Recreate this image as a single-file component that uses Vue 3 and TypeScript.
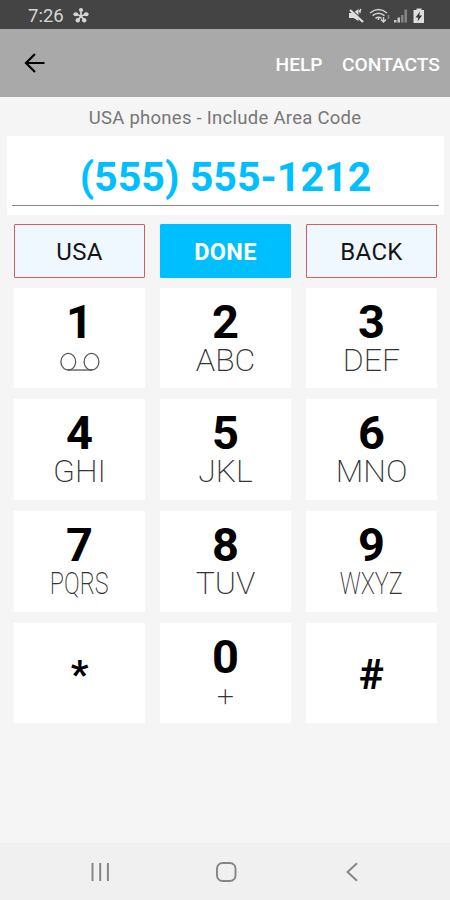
<script setup lang="ts">
interface Key {
  digit: string
  letters?: string
  kind?: 'voicemail' | 'star' | 'hash' | 'zero' | 'narrow'
}

const keys: Key[] = [
  { digit: '1', kind: 'voicemail' },
  { digit: '2', letters: 'ABC' },
  { digit: '3', letters: 'DEF' },
  { digit: '4', letters: 'GHI' },
  { digit: '5', letters: 'JKL' },
  { digit: '6', letters: 'MNO' },
  { digit: '7', letters: 'PQRS', kind: 'narrow' },
  { digit: '8', letters: 'TUV' },
  { digit: '9', letters: 'WXYZ', kind: 'narrow' },
  { digit: '*', kind: 'star' },
  { digit: '0', letters: '+', kind: 'zero' },
  { digit: '#', kind: 'hash' },
]
</script>

<template>
  <div class="screen">
    <div class="status">
      <span class="time">7:26</span>
      <svg class="flower" width="18" height="18" viewBox="0 0 18 18">
        <g fill="none" stroke="#d6d6d6" stroke-width="1.7">
          <path d="M9 9V5M9 9l4-1.300M9 9l2.600 3.600M9 9l-2.600 3.600M9 9L5 7.700" />
        </g>
        <g fill="#d6d6d6">
          <circle cx="9" cy="3" r="2.100" />
          <ellipse cx="14.200" cy="7.200" rx="2.400" ry="2" />
          <circle cx="12.200" cy="13.300" r="2.200" />
          <circle cx="5.800" cy="13.300" r="2.200" />
          <ellipse cx="3.800" cy="7.200" rx="2.400" ry="2" />
        </g>
      </svg>
      <svg class="indicators" width="80" height="18" viewBox="0 0 80 18">
        <g fill="#dedede">
          <path d="M1 6h4L10.500 2v12L5.500 11H1z" />
          <path d="M10.500 4.500l2-3 .8 1-1 4z" />
        </g>
        <path d="M2 1.500l14 12.500" stroke="#444" stroke-width="1.500" />
        <path d="M2 3l13 12" stroke="#dedede" stroke-width="2.200" />
        <g fill="none" stroke="#d2d2d2" stroke-width="1.500">
          <path d="M22 6Q30.500 -1 39 6M24.500 8.700Q30.500 4 36.500 8.700M27.500 11.300Q30.500 9 33.500 11.300" />
          <path d="M30.500 10v3M35.500 10v5M33 12.500l2.500 2.500 2.500-2.500" />
        </g>
        <path d="M40.500 8v4" stroke="#888" stroke-width="1.500" />
        <path d="M46 15.500v-2.500h2.500v2.500zM49.500 15.500v-5H52v5z" fill="#c8c8c8" />
        <path d="M53 15.500V8h2.500v7.500zM56.500 15.500V2.500H59v13z" fill="#858585" />
        <path d="M68.500 1.500h5v1.500H76v13H65.500V3H68.500z" fill="#dedede" />
        <path d="M72 4.500l-4.500 6h2.800L69.500 14.500l4.500-6h-2.700z" fill="#333" />
      </svg>
    </div>

    <header class="appbar">
      <svg class="arrow" width="22" height="22" viewBox="0 0 22 22">
        <path d="M11 1.900L2 11l9 9.100M2 11H20.500" fill="none" stroke="#000" stroke-width="2.200" />
      </svg>
      <nav class="actions">
        <span>HELP</span>
        <span>CONTACTS</span>
      </nav>
    </header>

    <p class="hint">USA phones - Include Area Code</p>

    <div class="entry">
      <div class="number">(555) 555-1212</div>
    </div>

    <div class="buttons">
      <button class="btn">USA</button>
      <button class="btn done">DONE</button>
      <button class="btn">BACK</button>
    </div>

    <div class="pad">
      <div v-for="key in keys" :key="key.digit" class="key" :class="key.kind">
        <span class="digit">{{ key.digit }}</span>
        <span v-if="key.letters" class="letters">{{ key.letters }}</span>
        <svg v-if="key.kind === 'voicemail'" class="tape" width="40" height="20" viewBox="0 0 40 20">
          <g fill="none" stroke="#555" stroke-width="1.300">
            <ellipse cx="8.300" cy="9.700" rx="7.400" ry="8.300" />
            <ellipse cx="31.500" cy="9.700" rx="7.400" ry="8.300" />
            <path d="M8 18h24" />
          </g>
        </svg>
      </div>
    </div>

    <footer class="navbar">
      <svg width="20" height="20" viewBox="0 0 20 20">
        <path d="M2.500 1v18M10.200 1v18M17.900 1v18" stroke="#858585" stroke-width="2" />
      </svg>
      <svg class="home" width="22" height="22" viewBox="0 0 22 22">
        <rect x="2" y="2" width="18.500" height="18" rx="5.500" fill="none" stroke="#858585" stroke-width="1.900" />
      </svg>
      <svg width="14" height="20" viewBox="0 0 14 20">
        <path d="M12 1.300L2.500 10l9.500 8.700" fill="none" stroke="#858585" stroke-width="1.900" />
      </svg>
    </footer>
  </div>
</template>

<style>
body {
  margin: 0;
}
</style>

<style scoped>
.screen {
  display: flex;
  flex-direction: column;
  width: 450px;
  height: 900px;
  overflow: hidden;
  background: #f5f5f5;
  font-family: Roboto, "Liberation Sans", sans-serif;
}
.status {
  display: flex;
  align-items: center;
  box-sizing: border-box;
  height: 29px;
  padding: 3px 22px 0 28px;
  background: #444;
  color: #d6d6d6;
}
.time {
  width: 36px;
  font-size: 18.500px;
  line-height: 26px;
  white-space: nowrap;
}
.flower {
  margin-left: 7.500px;
}
.indicators {
  margin-left: auto;
}
.appbar {
  display: flex;
  align-items: center;
  justify-content: space-between;
  box-sizing: border-box;
  height: 68px;
  padding: 0 10px 0 24px;
  background: #a9a9a9;
}
.actions {
  display: flex;
  gap: 19.500px;
  color: #fff;
  font-size: 19.200px;
  font-weight: 500;
  line-height: 22px;
  padding-top: 3px;
}
.hint {
  margin: 0;
  height: 39px;
  color: #777;
  font-size: 18.500px;
  letter-spacing: 0.270px;
  line-height: 42px;
  text-align: center;
}
.entry {
  box-sizing: border-box;
  height: 79px;
  margin: 0 6px 0 7px;
  padding: 0 5px;
  background: #fff;
}
.number {
  height: 70px;
  box-sizing: border-box;
  border-bottom: 1.500px solid #888;
  color: #00bfff;
  font-size: 41.200px;
  font-weight: 700;
  line-height: 82px;
  text-align: center;
}
.buttons {
  display: grid;
  grid-template-columns: repeat(3, 131px);
  column-gap: 15px;
  padding: 9px 0 0 14px;
}
.btn {
  height: 54px;
  padding: 2px 0 0;
  border: 1px solid #d65c62;
  border-radius: 1px;
  background: #f0f8ff;
  color: #151515;
  font-family: inherit;
  font-size: 24px;
  letter-spacing: 0.300px;
  line-height: 28px;
}
.btn.done {
  border-color: #00bfff;
  background: #00bfff;
  color: #fff;
  font-size: 23.500px;
  font-weight: 700;
}
.pad {
  display: grid;
  grid-template-columns: repeat(3, 131px);
  grid-auto-rows: 100.500px;
  gap: 11.300px 15px;
  padding: 9.500px 0 0 14px;
}
.key {
  display: flex;
  flex-direction: column;
  align-items: center;
  background: #fff;
  color: #000;
}
.digit {
  padding-top: 11px;
  font-size: 47px;
  font-weight: 700;
  line-height: 45px;
}
.letters {
  color: #333;
  font-size: 32px;
  font-weight: 200;
  line-height: 33px;
}
.narrow .letters {
  transform: scaleX(0.730);
}
.zero .letters {
  font-size: 30px;
}
.star,
.hash {
  justify-content: center;
}
.star .digit,
.hash .digit {
  padding-top: 3px;
  font-size: 42px;
}
.star .digit {
  padding-top: 4px;
  font-size: 39px;
}
.tape {
  margin-top: 8.500px;
}
.navbar {
  display: flex;
  align-items: center;
  justify-content: space-between;
  box-sizing: border-box;
  height: 57px;
  margin-top: auto;
  padding: 0 91px 0 90px;
  background: #f0f0f0;
}
.home {
  margin-right: 3px;
}
</style>
